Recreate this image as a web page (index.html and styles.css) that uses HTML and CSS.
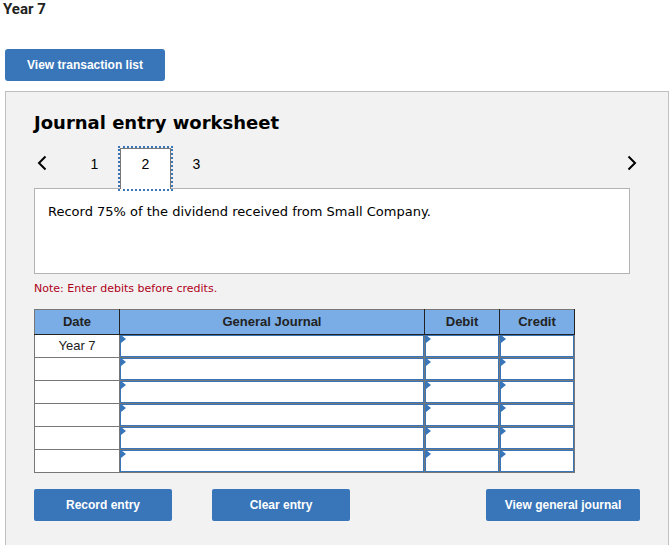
FILE: index.html
```html
<!DOCTYPE html>
<html lang="en">
<head>
<meta charset="utf-8">
<meta name="viewport" content="width=device-width, initial-scale=1">
<title>Journal entry worksheet</title>
<link rel="stylesheet" href="styles.css">
</head>
<body>
<h1 class="year">Year 7</h1>
<main class="content">
  <button type="button" class="btn btn-list">View transaction list</button>
  <section class="worksheet">
    <h2 class="title">Journal entry worksheet</h2>
    <nav class="tabs" aria-label="Entries">
      <button type="button" class="arrow" aria-label="Previous entry"><svg width="10" height="16" viewBox="0 0 10 16"><path d="M8.500 1.500 2 8l6.500 6.500"/></svg></button>
      <button type="button" class="tab">1</button>
      <button type="button" class="tab tab-active" aria-current="true">2</button>
      <button type="button" class="tab">3</button>
      <button type="button" class="arrow arrow-next" aria-label="Next entry"><svg width="10" height="16" viewBox="0 0 10 16"><path d="M1.500 1.500 8 8l-6.500 6.500"/></svg></button>
    </nav>
    <p class="prompt">Record 75% of the dividend received from Small Company.</p>
    <p class="note">Note: Enter debits before credits.</p>
    <table class="journal">
      <colgroup><col class="col-date"><col><col class="col-amount"><col class="col-amount"></colgroup>
      <thead>
        <tr><th scope="col">Date</th><th scope="col">General Journal</th><th scope="col">Debit</th><th scope="col">Credit</th></tr>
      </thead>
      <tbody>
        <tr><td>Year 7</td><td class="entry"><input type="text" aria-label="General Journal, line 1"></td><td class="entry"><input type="text" aria-label="Debit, line 1"></td><td class="entry"><input type="text" aria-label="Credit, line 1"></td></tr>
        <tr><td></td><td class="entry"><input type="text" aria-label="General Journal, line 2"></td><td class="entry"><input type="text" aria-label="Debit, line 2"></td><td class="entry"><input type="text" aria-label="Credit, line 2"></td></tr>
        <tr><td></td><td class="entry"><input type="text" aria-label="General Journal, line 3"></td><td class="entry"><input type="text" aria-label="Debit, line 3"></td><td class="entry"><input type="text" aria-label="Credit, line 3"></td></tr>
        <tr><td></td><td class="entry"><input type="text" aria-label="General Journal, line 4"></td><td class="entry"><input type="text" aria-label="Debit, line 4"></td><td class="entry"><input type="text" aria-label="Credit, line 4"></td></tr>
        <tr><td></td><td class="entry"><input type="text" aria-label="General Journal, line 5"></td><td class="entry"><input type="text" aria-label="Debit, line 5"></td><td class="entry"><input type="text" aria-label="Credit, line 5"></td></tr>
        <tr><td></td><td class="entry"><input type="text" aria-label="General Journal, line 6"></td><td class="entry"><input type="text" aria-label="Debit, line 6"></td><td class="entry"><input type="text" aria-label="Credit, line 6"></td></tr>
      </tbody>
    </table>
    <div class="actions">
      <button type="button" class="btn">Record entry</button>
      <button type="button" class="btn">Clear entry</button>
      <button type="button" class="btn btn-journal">View general journal</button>
    </div>
  </section>
</main>
</body>
</html>
```
FILE: styles.css
```css
* {
  box-sizing: border-box;
}

body {
  margin: 0;
  min-height: 100vh;
  display: flex;
  flex-direction: column;
  background: #fff;
  color: #000;
  font-family: "Liberation Sans", Arial, sans-serif;
}

.year {
  margin: 0 0 31px;
  padding-left: 3px;
  font-family: Roboto, sans-serif;
  font-size: 15px;
  line-height: 18px;
  font-weight: 700;
  color: #222;
}

.content {
  flex: 1;
  display: flex;
  flex-direction: column;
  align-items: stretch;
  padding: 0 1px 0 5px;
}

.btn {
  width: 138px;
  height: 32px;
  padding: 0;
  border: 0;
  border-radius: 2px;
  background: #3875b9;
  color: #fff;
  font: bold 12px/16px "Liberation Sans", Arial, sans-serif;
}

.btn-list {
  width: 160px;
  margin-bottom: 10px;
  border-radius: 3px;
}

.worksheet {
  flex: 1;
  padding: 19px 28px 23px;
  border: 1px solid #c0c0c0;
  border-bottom: 0;
  background: #f2f2f2;
}

.title {
  margin: 0 0 13px;
  font: bold 18px/24px "DejaVu Sans", Verdana, sans-serif;
}

.tabs {
  display: flex;
  align-items: flex-start;
  height: 40px;
}

.arrow {
  margin: 7px 22px 0 3px;
  padding: 0;
  border: 0;
  background: none;
  line-height: 0;
}

.arrow-next {
  margin: 7px 3px 0 auto;
}

.arrow path {
  fill: none;
  stroke: #000;
  stroke-width: 2;
}

.tab {
  width: 51px;
  height: 32px;
  padding: 0;
  border: 0;
  background: none;
  color: #000;
  font: 14px/16px "Liberation Sans", Arial, sans-serif;
}

.tab-active {
  position: relative;
  z-index: 1;
  height: 41px;
  padding-bottom: 10px;
  border: 1px solid #777;
  border-bottom: 0;
  background: #fff;
  outline: 2px dotted #3875b9;
}

.prompt {
  min-height: 86px;
  margin: 0 10px 7px 0;
  padding: 14px 13px;
  border: 1px solid #b3b3b3;
  background: #fff;
  font: 13px/18px "DejaVu Sans", Verdana, sans-serif;
}

.note {
  margin: 0 0 12px;
  color: #b00020;
  font: 11px/16px "DejaVu Sans", Verdana, sans-serif;
}

.journal {
  width: calc(100% - 65px);
  border-collapse: collapse;
  table-layout: fixed;
  background: #fff;
  font-size: 13px;
  line-height: 16px;
  color: #222;
}

.col-date {
  width: 85px;
}

.col-amount {
  width: 75px;
}

.journal th {
  height: 25px;
  padding: 0;
  border: 1px solid #222;
  border-top-color: #777;
  background: #7aade6;
}

.journal th:first-child {
  border-left-color: #777;
}

.journal td {
  height: 23px;
  padding: 0;
  border: 1px solid #777;
  text-align: center;
}

.entry {
  position: relative;
}

.entry input {
  display: block;
  width: 100%;
  height: 22px;
  padding: 0 6px;
  border: 1px solid #3875b9;
  border-radius: 0;
  background: #fff;
  font: 13px/16px "Liberation Sans", Arial, sans-serif;
}

.entry::before {
  content: "";
  position: absolute;
  left: 1px;
  top: 0;
  border-left: 5px solid #3875b9;
  border-top: 4px solid transparent;
  border-bottom: 4px solid transparent;
}

.actions {
  display: flex;
  gap: 40px;
  margin-top: 16px;
}

.btn-journal {
  width: 154px;
  margin-left: auto;
}
```
